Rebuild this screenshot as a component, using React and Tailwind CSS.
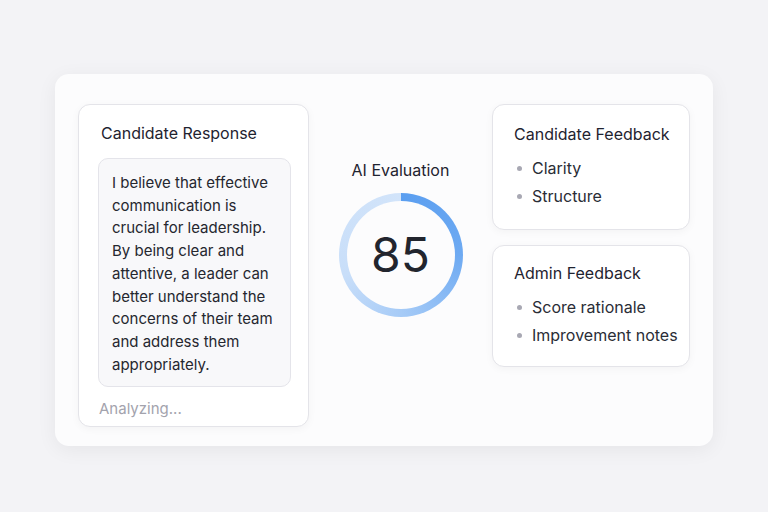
const font = { fontFamily: "Inter, 'Noto Sans', sans-serif" };

const Bullet = ({ children }) => (
  <li className="flex items-center gap-[10px] h-[28px] whitespace-nowrap">
    <span className="w-[5px] h-[5px] rounded-full bg-[#a8a8b3] shrink-0" />
    <span>{children}</span>
  </li>
);

const FeedbackCard = ({ title, items, compact }) => (
  <div
    className={
      compact
        ? "w-[198px] rounded-[12px] border border-[#e4e4e9] bg-white shadow-[0_2px_8px_rgba(0,0,0,0.04)] pl-[21px] pr-2 pt-[16px] pb-[17px]"
        : "w-[198px] rounded-[12px] border border-[#e4e4e9] bg-white shadow-[0_2px_8px_rgba(0,0,0,0.04)] pl-[21px] pr-2 pt-[18px] pb-[19px]"
    }
  >
    <h3 className="text-[16px] leading-[22px] text-[#1f2330]">{title}</h3>
    <ul className="mt-[9px] pl-[3px] text-[16px] text-[#2a2d36]">
      {items.map((it) => (
        <Bullet key={it}>{it}</Bullet>
      ))}
    </ul>
  </div>
);

const Ring = () => (
  <div className="relative w-[124px] h-[124px] rounded-full bg-[conic-gradient(from_0deg,#5a9ef0_0deg,#6eaaf2_90deg,#a6cbf7_180deg,#c8def9_250deg,#d2e4fa_360deg)]">
    <div className="absolute inset-[8px] rounded-full bg-[#fcfcfd] flex items-center justify-center text-[48px] leading-none text-[#22252e]">
      85
    </div>
  </div>
);

export default function App() {
  return (
    <div style={font} className="w-[768px] h-[512px] bg-[#f3f3f6] pt-[74px] pl-[55px]">
      <div className="w-[658px] h-[372px] rounded-[14px] bg-[#fcfcfd] shadow-[0_4px_20px_rgba(0,0,0,0.06)] flex pt-[30px] px-[23px]">
        <div className="w-[231px] h-[323px] rounded-[12px] border border-[#e4e4e9] bg-white shadow-[0_2px_8px_rgba(0,0,0,0.04)] pl-[19px] pr-[17px] pt-[17px]">
          <h3 className="pl-[3px] text-[16px] leading-[22px] text-[#1f2330]">Candidate Response</h3>
          <div className="mt-[14px] rounded-[10px] border border-[#e4e4ea] bg-[#f8f8fa] pl-[13px] pr-2 pt-[13px] pb-[10px] text-[15px] leading-[22.7px] text-[#25272f]">
            I believe that effective communication is crucial for leadership. By being clear and attentive, a leader can better understand the concerns of their team and address them appropriately.
          </div>
          <p className="mt-[11px] pl-px text-[15px] text-[#a3a3ad]">Analyzing...</p>
        </div>
        <div className="flex-1 flex flex-col items-center pt-[55px]">
          <h3 className="text-[16px] leading-[22px] text-[#1f2330]">AI Evaluation</h3>
          <div className="mt-[12px]">
            <Ring />
          </div>
        </div>
        <div className="flex flex-col gap-[15px]">
          <FeedbackCard title="Candidate Feedback" items={["Clarity", "Structure"]} />
          <FeedbackCard title="Admin Feedback" items={["Score rationale", "Improvement notes"]} compact />
        </div>
      </div>
    </div>
  );
}
